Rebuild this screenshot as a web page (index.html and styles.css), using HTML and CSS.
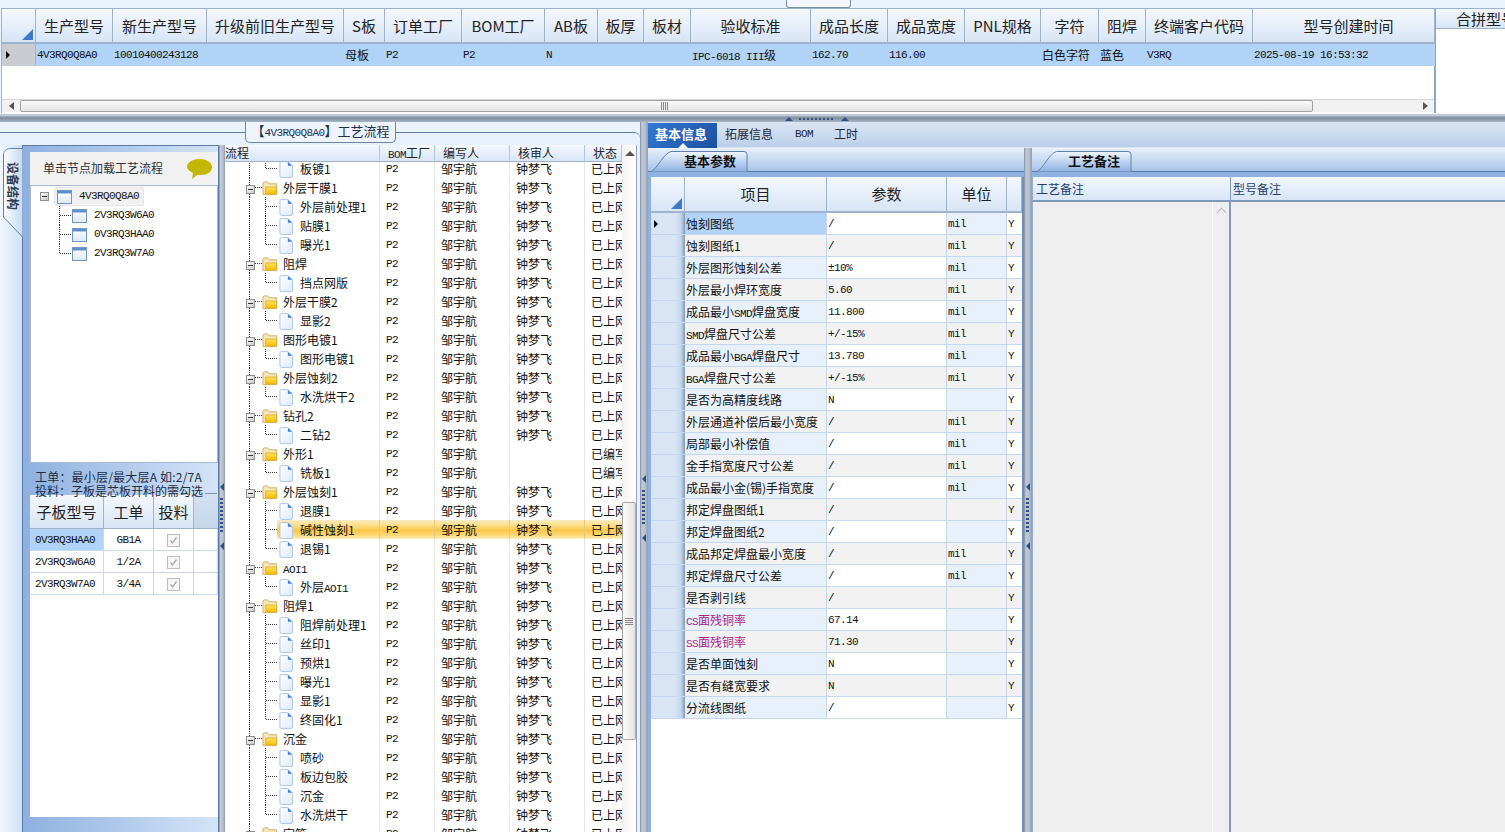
FILE: index.html
```html
<!DOCTYPE html>
<html lang="zh-CN">
<head>
<meta charset="utf-8">
<title>工艺流程</title>
<link rel="stylesheet" href="styles.css">
</head>
<body>
<svg class="defs" aria-hidden="true">
  <defs>
    <linearGradient id="fileg" x1="0" y1="0" x2="1" y2="1"><stop offset="0" stop-color="#ffffff"/><stop offset="1" stop-color="#dfeafa"/></linearGradient>
    <linearGradient id="foldg" x1="0" y1="0" x2="0" y2="1"><stop offset="0" stop-color="#ffe45c"/><stop offset="1" stop-color="#f7bb00"/></linearGradient>
    <linearGradient id="tabg" x1="0" y1="0" x2="0" y2="1"><stop offset="0" stop-color="#eff5fd"/><stop offset="1" stop-color="#8db0e2"/></linearGradient>
    <linearGradient id="vtabg" x1="0" y1="0" x2="1" y2="0"><stop offset="0" stop-color="#fbfdff"/><stop offset="1" stop-color="#c7daf3"/></linearGradient>
    <linearGradient id="wing" x1="0" y1="0" x2="0" y2="1"><stop offset="0" stop-color="#ffffff"/><stop offset="1" stop-color="#dfe8f4"/></linearGradient>
    <symbol id="file" viewBox="0 0 15 18"><path d="M2.5.5h7l5 4.500v11a1.500 1.500 0 0 1-1.500 1.500H2.500A1.500 1.500 0 0 1 1 16V2A1.500 1.500 0 0 1 2.500.5z" fill="url(#fileg)" stroke="#a6c3e6"/><path d="M9.500 1l4.500 4H9.500z" fill="#3d7fd8"/></symbol>
    <symbol id="folder" viewBox="0 0 17 17"><path d="M1 15.500V3.500l1-1.500h4l1.500 2h8v11.500z" fill="#f5e6b8" stroke="#cdae6a"/><path d="M4 15V7.500h11.500V15z" fill="url(#foldg)" stroke="#e0b030"/></symbol>
    <symbol id="win" viewBox="0 0 15 14"><rect x=".5" y=".5" width="14" height="13" fill="url(#wing)" stroke="#6f97c6"/><rect x="1" y="1" width="13" height="2.500" fill="#5e8fc8"/></symbol>
    <symbol id="chk" viewBox="0 0 13 13"><rect x=".5" y=".5" width="12" height="12" fill="#f6f6f6" stroke="#bdbdbd"/><path d="M3.500 6.500l2 2.500 4-5.500" fill="none" stroke="#a9a9a9" stroke-width="1.300"/></symbol>
    <symbol id="tabshape" viewBox="0 0 98 21" preserveAspectRatio="none"><path d="M.5 21C8 17 13 3 21 .5h73a3 3 0 0 1 3 3V21z" fill="url(#tabg)" stroke="#5f80ad"/></symbol>
  </defs>
</svg>

<div class="app">
  <section class="top">
    <div class="pull"></div>
    <div class="grid-wrap">
      <table class="tbl main-grid">
        <colgroup><col class="w34"><col class="w77"><col class="w94"><col class="w137"><col class="w41"><col class="w77"><col class="w83"><col class="w53"><col class="w46"><col class="w47"><col class="w120"><col class="w77"><col class="w77"><col class="w76"><col class="w58"><col class="w47"><col class="w107"><col class="w182"></colgroup>
        <thead>
          <tr><th class="corner"><i class="cornertri"></i></th><th>生产型号</th><th>新生产型号</th><th>升级前旧生产型号</th><th>S板</th><th>订单工厂</th><th>BOM工厂</th><th>AB板</th><th>板厚</th><th>板材</th><th>验收标准</th><th>成品长度</th><th>成品宽度</th><th>PNL规格</th><th>字符</th><th>阻焊</th><th>终端客户代码</th><th class="created">型号创建时间</th></tr>
        </thead>
        <tbody>
          <tr><td class="rh"><i class="cur"></i></td><td class="m">4V3RQ0Q8A0</td><td class="m">10010400243128</td><td></td><td>母板</td><td class="m">P2</td><td class="m">P2</td><td class="m">N</td><td></td><td></td><td><span class="m">IPC-6018 III</span>级</td><td class="m">162.70</td><td class="m">116.00</td><td></td><td>白色字符</td><td>蓝色</td><td class="m">V3RQ</td><td class="m">2025-08-19 16:53:32</td></tr>
        </tbody>
      </table>
      <div class="grid-space"></div>
      <div class="hscroll">
        <i class="arr-l"></i>
        <div class="hthumb"><i class="hgrip"></i></div>
        <i class="arr-r"></i>
      </div>
    </div>
    <div class="merge">
      <div class="merge-head">合拼型号</div>
    </div>
  </section>

  <div class="hsplit"><i class="tri"></i><i class="dots"></i><i class="tri"></i></div>

  <section class="lower">
    <div class="flow-area">
      <div class="flow-title">【<span class="m">4V3RQ0Q8A0</span>】工艺流程</div>
      <div class="flow-row">
        <div class="vtabs">
          <div class="vtab">
            <svg class="vtab-shape" viewBox="0 0 20 90"><path d="M19.500 .5H8C3 .5 .5 3 .5 7v62l19 20" fill="url(#vtabg)" stroke="#5f80ad"/></svg>
            <span class="vtab-text">设备结构</span>
          </div>
        </div>
        <div class="lp">
          <div class="lp-hd"><span>单击节点加载工艺流程</span>
            <svg class="bubble" viewBox="0 0 25 20"><path d="M12.500 0C19 0 25 3 25 8s-5 8-11 8c-2 0-3 0-4 0l-5 4 1-6C2 12 0 10 0 8 0 3 6 0 12.500 0z" fill="#c3b800"/></svg>
          </div>
          <div class="lp-tree">
            <div class="lt-root"><i class="bx"></i><span class="lt-sel"><svg class="wi"><use href="#win"/></svg><span class="m">4V3RQ0Q8A0</span></span></div>
            <div class="lt-child"><svg class="wi"><use href="#win"/></svg><span class="m">2V3RQ3W6A0</span></div>
            <div class="lt-child"><svg class="wi"><use href="#win"/></svg><span class="m">0V3RQ3HAA0</span></div>
            <div class="lt-child last"><svg class="wi"><use href="#win"/></svg><span class="m">2V3RQ3W7A0</span></div>
          </div>
          <div class="lp-note">
            <p class="wide-line">工单：最小层/最大层A 如:2/7A</p>
            <p>投料：子板是芯板开料的需勾选</p>
          </div>
          <div class="lp-grid">
            <table class="tbl sub-grid">
              <colgroup><col class="w74"><col class="w50"><col class="w40"><col></colgroup>
              <thead><tr><th>子板型号</th><th>工单</th><th>投料</th><th class="blank"></th></tr></thead>
              <tbody>
                <tr><td class="m picked">0V3RQ3HAA0</td><td class="m ctr">GB1A</td><td class="ctr"><svg class="ck"><use href="#chk"/></svg></td><td></td></tr>
                <tr><td class="m">2V3RQ3W6A0</td><td class="m ctr">1/2A</td><td class="ctr"><svg class="ck"><use href="#chk"/></svg></td><td></td></tr>
                <tr><td class="m">2V3RQ3W7A0</td><td class="m ctr">3/4A</td><td class="ctr"><svg class="ck"><use href="#chk"/></svg></td><td></td></tr>
              </tbody>
            </table>
          </div>
          <div class="lp-foot"></div>
        </div>
        <div class="vsplit thin"><i class="vgrip"></i></div>
        <div class="tree-panel">
          <div class="tree-main">
            <table class="tree-head">
              <colgroup><col class="t1"><col class="t2"><col class="t3"><col class="t4"><col class="t5"></colgroup>
              <tr><th class="first">流程</th><th class="b"><span class="m">BOM</span>工厂</th><th>编写人</th><th>核审人</th><th>状态</th></tr>
            </table>
            <table class="tree-body">
              <colgroup><col class="t1"><col class="t2"><col class="t3"><col class="t4"><col class="t5"></colgroup>
              <tr><td class="n c l"><svg class="fi"><use href="#file"/></svg>板镀1</td><td class="m">P2</td><td>邹宇航</td><td>钟梦飞</td><td>已上网</td></tr>
              <tr><td class="n f"><i class="bx"></i><svg class="fo"><use href="#folder"/></svg>外层干膜1</td><td class="m">P2</td><td>邹宇航</td><td>钟梦飞</td><td>已上网</td></tr>
              <tr><td class="n c"><svg class="fi"><use href="#file"/></svg>外层前处理1</td><td class="m">P2</td><td>邹宇航</td><td>钟梦飞</td><td>已上网</td></tr>
              <tr><td class="n c"><svg class="fi"><use href="#file"/></svg>贴膜1</td><td class="m">P2</td><td>邹宇航</td><td>钟梦飞</td><td>已上网</td></tr>
              <tr><td class="n c l"><svg class="fi"><use href="#file"/></svg>曝光1</td><td class="m">P2</td><td>邹宇航</td><td>钟梦飞</td><td>已上网</td></tr>
              <tr><td class="n f"><i class="bx"></i><svg class="fo"><use href="#folder"/></svg>阻焊</td><td class="m">P2</td><td>邹宇航</td><td>钟梦飞</td><td>已上网</td></tr>
              <tr><td class="n c l"><svg class="fi"><use href="#file"/></svg>挡点网版</td><td class="m">P2</td><td>邹宇航</td><td>钟梦飞</td><td>已上网</td></tr>
              <tr><td class="n f"><i class="bx"></i><svg class="fo"><use href="#folder"/></svg>外层干膜2</td><td class="m">P2</td><td>邹宇航</td><td>钟梦飞</td><td>已上网</td></tr>
              <tr><td class="n c l"><svg class="fi"><use href="#file"/></svg>显影2</td><td class="m">P2</td><td>邹宇航</td><td>钟梦飞</td><td>已上网</td></tr>
              <tr><td class="n f"><i class="bx"></i><svg class="fo"><use href="#folder"/></svg>图形电镀1</td><td class="m">P2</td><td>邹宇航</td><td>钟梦飞</td><td>已上网</td></tr>
              <tr><td class="n c l"><svg class="fi"><use href="#file"/></svg>图形电镀1</td><td class="m">P2</td><td>邹宇航</td><td>钟梦飞</td><td>已上网</td></tr>
              <tr><td class="n f"><i class="bx"></i><svg class="fo"><use href="#folder"/></svg>外层蚀刻2</td><td class="m">P2</td><td>邹宇航</td><td>钟梦飞</td><td>已上网</td></tr>
              <tr><td class="n c l"><svg class="fi"><use href="#file"/></svg>水洗烘干2</td><td class="m">P2</td><td>邹宇航</td><td>钟梦飞</td><td>已上网</td></tr>
              <tr><td class="n f"><i class="bx"></i><svg class="fo"><use href="#folder"/></svg>钻孔2</td><td class="m">P2</td><td>邹宇航</td><td>钟梦飞</td><td>已上网</td></tr>
              <tr><td class="n c l"><svg class="fi"><use href="#file"/></svg>二钻2</td><td class="m">P2</td><td>邹宇航</td><td>钟梦飞</td><td>已上网</td></tr>
              <tr><td class="n f"><i class="bx"></i><svg class="fo"><use href="#folder"/></svg>外形1</td><td class="m">P2</td><td>邹宇航</td><td></td><td>已编写</td></tr>
              <tr><td class="n c l"><svg class="fi"><use href="#file"/></svg>铣板1</td><td class="m">P2</td><td>邹宇航</td><td></td><td>已编写</td></tr>
              <tr><td class="n f"><i class="bx"></i><svg class="fo"><use href="#folder"/></svg>外层蚀刻1</td><td class="m">P2</td><td>邹宇航</td><td>钟梦飞</td><td>已上网</td></tr>
              <tr><td class="n c"><svg class="fi"><use href="#file"/></svg>退膜1</td><td class="m">P2</td><td>邹宇航</td><td>钟梦飞</td><td>已上网</td></tr>
              <tr class="sel"><td class="n c"><svg class="fi"><use href="#file"/></svg>碱性蚀刻1</td><td class="m">P2</td><td>邹宇航</td><td>钟梦飞</td><td>已上网</td></tr>
              <tr><td class="n c l"><svg class="fi"><use href="#file"/></svg>退锡1</td><td class="m">P2</td><td>邹宇航</td><td>钟梦飞</td><td>已上网</td></tr>
              <tr><td class="n f"><i class="bx"></i><svg class="fo"><use href="#folder"/></svg><span class="m">AOI1</span></td><td class="m">P2</td><td>邹宇航</td><td>钟梦飞</td><td>已上网</td></tr>
              <tr><td class="n c l"><svg class="fi"><use href="#file"/></svg>外层<span class="m">AOI1</span></td><td class="m">P2</td><td>邹宇航</td><td>钟梦飞</td><td>已上网</td></tr>
              <tr><td class="n f"><i class="bx"></i><svg class="fo"><use href="#folder"/></svg>阻焊1</td><td class="m">P2</td><td>邹宇航</td><td>钟梦飞</td><td>已上网</td></tr>
              <tr><td class="n c"><svg class="fi"><use href="#file"/></svg>阻焊前处理1</td><td class="m">P2</td><td>邹宇航</td><td>钟梦飞</td><td>已上网</td></tr>
              <tr><td class="n c"><svg class="fi"><use href="#file"/></svg>丝印1</td><td class="m">P2</td><td>邹宇航</td><td>钟梦飞</td><td>已上网</td></tr>
              <tr><td class="n c"><svg class="fi"><use href="#file"/></svg>预烘1</td><td class="m">P2</td><td>邹宇航</td><td>钟梦飞</td><td>已上网</td></tr>
              <tr><td class="n c"><svg class="fi"><use href="#file"/></svg>曝光1</td><td class="m">P2</td><td>邹宇航</td><td>钟梦飞</td><td>已上网</td></tr>
              <tr><td class="n c"><svg class="fi"><use href="#file"/></svg>显影1</td><td class="m">P2</td><td>邹宇航</td><td>钟梦飞</td><td>已上网</td></tr>
              <tr><td class="n c l"><svg class="fi"><use href="#file"/></svg>终固化1</td><td class="m">P2</td><td>邹宇航</td><td>钟梦飞</td><td>已上网</td></tr>
              <tr><td class="n f"><i class="bx"></i><svg class="fo"><use href="#folder"/></svg>沉金</td><td class="m">P2</td><td>邹宇航</td><td>钟梦飞</td><td>已上网</td></tr>
              <tr><td class="n c"><svg class="fi"><use href="#file"/></svg>喷砂</td><td class="m">P2</td><td>邹宇航</td><td>钟梦飞</td><td>已上网</td></tr>
              <tr><td class="n c"><svg class="fi"><use href="#file"/></svg>板边包胶</td><td class="m">P2</td><td>邹宇航</td><td>钟梦飞</td><td>已上网</td></tr>
              <tr><td class="n c"><svg class="fi"><use href="#file"/></svg>沉金</td><td class="m">P2</td><td>邹宇航</td><td>钟梦飞</td><td>已上网</td></tr>
              <tr><td class="n c l"><svg class="fi"><use href="#file"/></svg>水洗烘干</td><td class="m">P2</td><td>邹宇航</td><td>钟梦飞</td><td>已上网</td></tr>
              <tr><td class="n f"><i class="bx"></i><svg class="fo"><use href="#folder"/></svg>字符</td><td class="m">P2</td><td>邹宇航</td><td>钟梦飞</td><td>已上网</td></tr>
            </table>
          </div>
          <div class="vscroll"><i class="arr-u"></i><div class="vthumb"><i class="vthumb-grip"></i></div></div>
        </div>
      </div>
    </div>
    <div class="vsplit wide"><i class="vgrip"></i></div>

    <div class="detail">
      <div class="tabbar">
        <span class="tab on">基本信息</span><span class="tab t2w">拓展信息</span><span class="tab bomt m">BOM</span><span class="tab t3w">工时</span>
      </div>
      <div class="detail-body">
        <div class="params">
          <div class="strip"><div class="ptab"><svg class="ptab-bg"><use href="#tabshape"/></svg><span>基本参数</span></div></div>
          <div class="band"></div>
          <div class="pgrid">
            <table class="tbl par-grid">
              <colgroup><col class="w34"><col class="w142"><col class="w120"><col class="w60"><col></colgroup>
              <thead><tr><th class="corner"><i class="cornertri"></i></th><th>项目</th><th>参数</th><th>单位</th><th></th></tr></thead>
              <tbody>
                <tr><td class="rh2"><i class="cur"></i></td><td class="picked">蚀刻图纸</td><td class="m">/</td><td class="m">mil</td><td class="m">Y</td></tr>
                <tr><td class="rh2"></td><td>蚀刻图纸1</td><td class="m">/</td><td class="m">mil</td><td class="m">Y</td></tr>
                <tr><td class="rh2"></td><td>外层图形蚀刻公差</td><td class="m">±10%</td><td class="m">mil</td><td class="m">Y</td></tr>
                <tr><td class="rh2"></td><td>外层最小焊环宽度</td><td class="m">5.60</td><td class="m">mil</td><td class="m">Y</td></tr>
                <tr><td class="rh2"></td><td>成品最小<span class="m">SMD</span>焊盘宽度</td><td class="m">11.800</td><td class="m">mil</td><td class="m">Y</td></tr>
                <tr><td class="rh2"></td><td><span class="m">SMD</span>焊盘尺寸公差</td><td class="m">+/-15%</td><td class="m">mil</td><td class="m">Y</td></tr>
                <tr><td class="rh2"></td><td>成品最小<span class="m">BGA</span>焊盘尺寸</td><td class="m">13.780</td><td class="m">mil</td><td class="m">Y</td></tr>
                <tr><td class="rh2"></td><td><span class="m">BGA</span>焊盘尺寸公差</td><td class="m">+/-15%</td><td class="m">mil</td><td class="m">Y</td></tr>
                <tr><td class="rh2"></td><td>是否为高精度线路</td><td class="m">N</td><td class="m"></td><td class="m">Y</td></tr>
                <tr><td class="rh2"></td><td>外层通道补偿后最小宽度</td><td class="m">/</td><td class="m">mil</td><td class="m">Y</td></tr>
                <tr><td class="rh2"></td><td>局部最小补偿值</td><td class="m">/</td><td class="m">mil</td><td class="m">Y</td></tr>
                <tr><td class="rh2"></td><td>金手指宽度尺寸公差</td><td class="m">/</td><td class="m">mil</td><td class="m">Y</td></tr>
                <tr><td class="rh2"></td><td>成品最小金(锡)手指宽度</td><td class="m">/</td><td class="m">mil</td><td class="m">Y</td></tr>
                <tr><td class="rh2"></td><td>邦定焊盘图纸1</td><td class="m">/</td><td class="m"></td><td class="m">Y</td></tr>
                <tr><td class="rh2"></td><td>邦定焊盘图纸2</td><td class="m">/</td><td class="m"></td><td class="m">Y</td></tr>
                <tr><td class="rh2"></td><td>成品邦定焊盘最小宽度</td><td class="m">/</td><td class="m">mil</td><td class="m">Y</td></tr>
                <tr><td class="rh2"></td><td>邦定焊盘尺寸公差</td><td class="m">/</td><td class="m">mil</td><td class="m">Y</td></tr>
                <tr><td class="rh2"></td><td>是否剥引线</td><td class="m">/</td><td class="m"></td><td class="m">Y</td></tr>
                <tr><td class="rh2"></td><td class="hot"><span class="m">CS</span>面残铜率</td><td class="m">67.14</td><td class="m"></td><td class="m">Y</td></tr>
                <tr><td class="rh2"></td><td class="hot"><span class="m">SS</span>面残铜率</td><td class="m">71.30</td><td class="m"></td><td class="m">Y</td></tr>
                <tr><td class="rh2"></td><td>是否单面蚀刻</td><td class="m">N</td><td class="m"></td><td class="m">Y</td></tr>
                <tr><td class="rh2"></td><td>是否有缝宽要求</td><td class="m">N</td><td class="m"></td><td class="m">Y</td></tr>
                <tr><td class="rh2"></td><td>分流线图纸</td><td class="m">/</td><td class="m"></td><td class="m">Y</td></tr>
              </tbody>
            </table>
          </div>
        </div>
        <div class="vsplit mid"><i class="vgrip"></i></div>
        <div class="remarks">
          <div class="strip"><div class="ptab rt"><svg class="ptab-bg"><use href="#tabshape"/></svg><span>工艺备注</span></div></div>
          <div class="band"></div>
          <div class="rem-head"><div class="rc1">工艺备注</div><div class="rc2">型号备注</div></div>
          <div class="rem-body"><div class="rb1"><div class="rb-scroll"><i class="chev"></i></div></div><div class="rb2"></div></div>
        </div>
      </div>
    </div>
  </section>
</div>
</body>
</html>
```
FILE: styles.css
```css
* { box-sizing: border-box; }
html, body { margin: 0; height: 100%; overflow: hidden; }
body { font: 12px/1.2 "Noto Sans CJK SC", "Noto Sans", sans-serif; color: #111; background: #eaf2fc; }
i { display: block; }
.defs { position: absolute; width: 0; height: 0; }
.m { font-family: "Liberation Mono", "Noto Sans CJK SC", monospace; font-size: 11px; letter-spacing: -.6px; }
span.m { line-height: 1; }
.app { width: 1505px; height: 832px; display: flex; flex-direction: column; overflow: hidden; }

/* shared table */
.tbl { border-collapse: separate; border-spacing: 0; table-layout: fixed; width: 100%; }
.tbl th { font-weight: 400; font-size: 15px; color: #222; background: linear-gradient(#f4f8fe, #d8e5f6); border-right: 1px solid #9fb4cc; border-bottom: 2px solid #9fb4cc; padding: 0; white-space: nowrap; overflow: hidden; }
.tbl td { padding: 0 0 0 1px; white-space: nowrap; overflow: hidden; }
.tbl td.m { padding-top: 2px; }
.corner { position: relative; }
.cornertri { position: absolute; right: 2px; bottom: 2px; width: 0; height: 0; border-style: solid; border-width: 0 0 11px 11px; border-color: transparent transparent #3f78c9 transparent; }
.cur { width: 0; height: 0; border-style: solid; border-width: 4px 0 4px 4px; border-color: transparent transparent transparent #111; margin-left: 3px; }

/* top grid */
.top { position: relative; height: 113px; padding-top: 8px; display: flex; background: #eaf2fc; }
.pull { position: absolute; left: 786px; top: 0; width: 65px; height: 8px; background: #f3f7fd; border: 1px solid #7a8ea8; border-top: 0; border-radius: 0 0 3px 3px; }
.grid-wrap { width: 1435px; margin-left: 1px; border: 1px solid #9fb4cc; border-bottom: 0; border-right: 2px solid #8ea6c4; background: #fff; display: flex; flex-direction: column; }
.w34 { width: 34px; } .w77 { width: 77px; } .w94 { width: 94px; } .w137 { width: 137px; } .w41 { width: 41px; } .w83 { width: 83px; } .w53 { width: 53px; } .w46 { width: 46px; } .w47 { width: 47px; } .w120 { width: 120px; } .w76 { width: 76px; } .w58 { width: 58px; } .w107 { width: 107px; } .w182 { width: 182px; }
.w74 { width: 74px; } .w50 { width: 50px; } .w40 { width: 40px; } .w142 { width: 142px; } .w60 { width: 60px; }
.main-grid th { height: 35px; }
.main-grid th.created { padding-left: 10px; }
.main-grid td { height: 22px; background: #b0d3f7; }
.main-grid td.rh { background: #c9ccd1; border-right: 1px solid #9fb4cc; }
.grid-space { flex: 1; }
.hscroll { height: 13px; background: #f1f1f1; display: flex; align-items: center; border-top: 1px solid #d8d8d8; margin-bottom: 1px; }
.arr-l { width: 0; height: 0; margin-left: 7px; border-style: solid; border-width: 4px 5px 4px 0; border-color: transparent #555 transparent transparent; }
.hthumb { width: 1293px; height: 12px; margin-left: 6px; background: linear-gradient(#fbfbfb, #e3e3e3); border: 1px solid #a3a3a3; border-radius: 2px; display: flex; justify-content: center; align-items: center; }
.hgrip { width: 7px; height: 8px; margin-right: 4px; background: repeating-linear-gradient(90deg, #888 0 1px, transparent 1px 2px); }
.arr-r { width: 0; height: 0; margin-left: 110px; border-style: solid; border-width: 4px 0 4px 5px; border-color: transparent transparent transparent #555; }
.merge { flex: 1; background: #fff; }
.merge-head { height: 21px; padding-left: 20px; font-size: 15px; color: #222; line-height: 20px; white-space: nowrap; overflow: hidden; background: linear-gradient(#f4f8fe, #d8e5f6); border-top: 1px solid #9fb4cc; border-bottom: 1px solid #9fb4cc; }

/* horizontal splitter */
.hsplit { height: 9px; flex: none; display: flex; align-items: flex-end; padding: 0 0 1px 785px; gap: 6px; background: linear-gradient(#f3f6fa 0, #f3f6fa 1px, #9aa8b8 1px, #dfe6ee 2px, #a4b0c0 3px, #808e9f 5px, #a8b6c8 100%); }
.tri { width: 0; height: 0; border-style: solid; border-width: 0 4px 4px; border-color: transparent transparent #34507e; }
.dots { width: 36px; height: 2px; margin-bottom: 1px; background: repeating-linear-gradient(90deg, #34507e 0 2px, transparent 2px 4px); }

/* lower area */
.lower { flex: 1; min-height: 0; display: flex; }
.flow-area { position: relative; width: 640px; flex: none; margin-top: 10px; border-top: 1px solid #5e7ba3; padding-top: 12px; background: #e8f1fb; border-top-right-radius: 6px; }
.flow-title { position: absolute; left: 245px; top: -11px; width: 151px; height: 21px; font-size: 13px; line-height: 18px; text-align: center; color: #1e3050; background: #eef4fc; border: 1px solid #6a85a8; border-top: 0; border-radius: 0 0 5px 5px; white-space: nowrap; }
.flow-row { display: flex; height: 687px; }
.vtabs { width: 22px; flex: none; background: linear-gradient(90deg, #f1f7fe, #cfe1f7); padding: 3px 0 0 3px; }
.vtab { position: relative; width: 20px; height: 90px; }
.vtab-shape { position: absolute; inset: 0; width: 20px; height: 90px; }
.vtab-text { position: absolute; left: 3px; top: 14px; writing-mode: vertical-rl; text-orientation: sideways; font-size: 12px; font-weight: 700; color: #333b4d; }

.lp { width: 197px; flex: none; display: flex; flex-direction: column; border-left: 1px solid #5a7ba8; border-top: 1px solid #5a7ba8; border-right: 1px solid #5a7ba8; padding: 6px 0 0 7px; background: linear-gradient(90deg, #8eb0e0, #d4e4f7); }
.lp-hd { height: 33px; flex: none; display: flex; align-items: center; justify-content: space-between; padding: 0 6px 0 13px; background: #f1f1f1; color: #2b3340; font-size: 12px; }
.bubble { width: 25px; height: 20px; }
.lp-tree { height: 278px; flex: none; background: #fff; border: 1px solid #a9bcd2; padding-top: 1px; }
.lt-root { display: flex; align-items: center; height: 19px; padding-left: 9px; }
.lt-root .bx { flex: none; }
.lt-sel { display: flex; align-items: center; gap: 7px; width: 90px; height: 19px; margin-left: 5px; padding-left: 3px; background: #f1f1f1; border-radius: 3px; box-shadow: inset 0 0 0 1px #e6e6e6; }
.lt-child { display: flex; align-items: center; gap: 7px; height: 19px; padding-left: 41px; background: repeating-linear-gradient(180deg, #333 0 1px, transparent 1px 2px) 28px 0/1px 100% no-repeat, repeating-linear-gradient(90deg, #333 0 1px, transparent 1px 2px) 29px 9px/11px 1px no-repeat; }
.lt-child.last { background-size: 1px 10px, 11px 1px; }
.wi { width: 15px; height: 14px; flex: none; }
.lp-note { position: relative; z-index: 1; height: 32px; flex: none; padding: 7px 0 0 5px; color: #1c2c44; font-size: 12px; line-height: 14px; white-space: nowrap; }
.lp-note::after { content: ""; position: absolute; right: 1px; top: 30px; width: 12px; height: 1px; background: #7f93ad; }
.lp-note p { margin: 0; }
.lp-note .wide-line { letter-spacing: .2px; }
.lp-grid { height: 322px; flex: none; background: #fff; }
.sub-grid th { height: 34px; font-size: 15px; border-bottom: 1px solid #9fb4cc; }
.sub-grid th.blank { background: linear-gradient(#d3e0f1, #c6d6ea); border-right: 0; }
.sub-grid td { height: 22px; border-right: 1px solid #c6d9ef; border-bottom: 1px solid #c6d9ef; padding-left: 5px; background: #fff; vertical-align: middle; }
.sub-grid td.picked { background: #b0d3f7; }
.sub-grid td.ctr { text-align: center; padding-left: 0; }
.ck { width: 13px; height: 13px; display: inline-block; vertical-align: middle; }
.lp-foot { flex: 1; }

.vsplit { flex: none; position: relative; background: linear-gradient(90deg, #7b8ea8, #c4ccd6 25%, #b3bcc8 70%, #8d9aab); }
.vsplit.thin { width: 6px; }
.vsplit.wide { width: 8px; }
.vsplit.mid { width: 8px; }
.vgrip { position: absolute; left: 1px; width: 3px; height: 35px; background: repeating-linear-gradient(180deg, #34507e 0 2px, transparent 2px 4px); }
.thin .vgrip { top: 353px; }
.wide .vgrip { top: 368px; left: 2px; }
.mid .vgrip { top: 350px; left: 2px; }
.vgrip::before, .vgrip::after { content: ""; position: absolute; left: 0; border-style: solid; border-width: 4px 4px 4px 0; border-color: transparent #34507e transparent transparent; }
.vgrip::before { top: -15px; }
.vgrip::after { bottom: -17px; }

.tree-panel { width: 412px; flex: none; display: flex; background: #fff; }
.tree-main { width: 397px; flex: none; overflow: hidden; }
.tree-head, .tree-body { border-collapse: separate; border-spacing: 0; table-layout: fixed; width: 397px; }
.t1 { width: 155px; } .t2 { width: 55px; } .t3 { width: 75px; } .t4 { width: 75px; } .t5 { width: 37px; }
.tree-head { position: relative; z-index: 1; }
.tree-head th { height: 17px; font-weight: 400; font-size: 12px; color: #222; text-align: left; padding: 0 0 0 8px; white-space: nowrap; overflow: hidden; background: linear-gradient(#f4f8fe, #d8e5f6); border-right: 1px solid #b5c6da; border-bottom: 1px solid #9fb4cc; }
.tree-head th.first { padding-left: 0; }
.tree-body { margin-top: -3px; }
.tree-body td { height: 19px; padding: 0 0 0 6px; white-space: nowrap; overflow: hidden; border-right: 1px solid #e4e6ea; line-height: 17px; }
.tree-body td.m { padding-top: 1px; }
.tree-body td:last-child { border-right: 0; }
.tree-body td.n { --dv: repeating-linear-gradient(180deg, #333 0 1px, transparent 1px 2px); --dh: repeating-linear-gradient(90deg, #333 0 1px, transparent 1px 2px); background: var(--dv) 24px 0/1px 100% no-repeat; padding-left: 54px; }
.tree-body td.f { padding-left: 21px; background: var(--dv) 24px 0/1px 100% no-repeat, var(--dh) 30px 9px/7px 1px no-repeat; }
.tree-body td.c { background: var(--dv) 24px 0/1px 100% no-repeat, var(--dv) 40px 0/1px 100% no-repeat, var(--dh) 41px 9px/12px 1px no-repeat; }
.tree-body td.c.l { background: var(--dv) 24px 0/1px 100% no-repeat, var(--dv) 40px 0/1px 10px no-repeat, var(--dh) 41px 9px/12px 1px no-repeat; }
.bx { display: inline-block; position: relative; width: 9px; height: 9px; vertical-align: -1px; margin-right: 7px; background: linear-gradient(135deg, #fff, #c8c8c8); border: 1px solid #8e8e8e; }
.lt-root .bx { margin-right: 0; }
.bx::after { content: ""; position: absolute; left: 1px; top: 3px; width: 5px; height: 1px; background: #333; }
.fo { width: 16px; height: 16px; vertical-align: -3px; margin-right: 5px; }
.fi { width: 14px; height: 17px; vertical-align: -4px; margin-right: 7px; }
.sel td { background: linear-gradient(#f6ecc4, #fde08c 25%, #fbc94a 55%, #fdd878 80%, #fdf0c0); border-right-color: #e8c878; }
.tree-body .sel td.n { background: var(--dv) 24px 0/1px 100% no-repeat, var(--dv) 40px 0/1px 100% no-repeat, var(--dh) 41px 9px/11px 1px no-repeat, linear-gradient(#f6ecc4, #fde08c 25%, #fbc94a 55%, #fdd878 80%, #fdf0c0) 52px 0/100% 100% no-repeat; }
.vscroll { width: 15px; flex: none; background: linear-gradient(90deg, #f2f2f2, #fff); border-right: 1px solid #8ea6c4; }
.arr-u { width: 0; height: 0; margin: 6px 0 0 3px; border-style: solid; border-width: 0 5px 5px; border-color: transparent transparent #555; }
.vthumb { width: 14px; height: 238px; margin-top: 346px; background: linear-gradient(90deg, #fbfbfb, #e4e4e4); border: 1px solid #a8a8a8; border-radius: 2px; display: flex; align-items: center; justify-content: center; }
.vthumb-grip { width: 8px; height: 7px; background: repeating-linear-gradient(180deg, #888 0 1px, transparent 1px 2px); }

/* detail */
.detail { flex: 1; min-width: 0; display: flex; flex-direction: column; }
.tabbar { height: 26px; flex: none; display: flex; align-items: flex-start; background: linear-gradient(#dbe6f5, #bbcfe9); border-bottom: 1px solid #dfe4ea; }
.tab { height: 24px; line-height: 24px; font-size: 12px; color: #1b2738; }
.tab.on { position: relative; width: 69px; height: 25px; margin-top: 1px; padding-left: 7px; line-height: 22px; font-size: 13px; font-weight: 700; color: #fff; background: linear-gradient(135deg, #3478d6, #1c4f9e); }
.tab.on::after { content: ""; position: absolute; left: 30px; bottom: 0; border-style: solid; border-width: 0 5px 5px; border-color: transparent transparent #eaf2fc; }
.t2w { margin-left: 8px; }
.tab.bomt { margin-left: 22px; font-size: 11px; line-height: 24px; }
.t3w { margin-left: 21px; }
.detail-body { flex: 1; min-height: 0; display: flex; }
.params { width: 376px; flex: none; display: flex; flex-direction: column; }
.strip { height: 23px; flex: none; padding: 3px 0 0 2px; background: linear-gradient(#e9f1fb, #a8c3e8); }
.ptab { position: relative; width: 98px; height: 20px; font-size: 13px; font-weight: 700; color: #111; line-height: 20px; padding-left: 34px; }
.ptab span { position: relative; }
.ptab-bg { position: absolute; left: 0; top: 0; width: 100%; height: 21px; }
.ptab.rt { margin-left: 2px; width: 96px; padding-left: 32px; }
.band { height: 6px; flex: none; background: #8fb0e0; border-top: 1px solid #5a7ba8; }
.pgrid { flex: 1; min-height: 0; background: #fff; border-left: 3px solid #8fb0e0; border-right: 2px solid #6f8fb8; }
.par-grid th { height: 36px; font-size: 15px; }
.par-grid td { height: 22px; border-right: 1px solid #c5d7ef; border-bottom: 1px solid #c5d7ef; padding: 1px 0 0 1px; background: #fff; }
.par-grid td:nth-child(2), .par-grid td:nth-child(4) { background: #e7f0fb; }
.par-grid tr:nth-child(even) td { background: #f2f2f2; }
.par-grid td:nth-child(5) { border-right: 0; }
.par-grid td.rh2, .par-grid tr:nth-child(even) td.rh2 { background: linear-gradient(90deg, #d8e5f5 70%, #c6d6ea 88%, #7f9ab8); border-right: 0; padding: 0; }
.par-grid td.picked { background: #b0d3f7; }
.par-grid td.hot { color: #a81f8c; }
.remarks { flex: 1; min-width: 0; display: flex; flex-direction: column; }
.rem-head { height: 25px; flex: none; display: flex; background: linear-gradient(#f2f7fe, #d8e5f6); border-bottom: 2px solid #7f9ab8; color: #24406e; line-height: 24px; border-left: 1px solid #8fb0e0; }
.rc1 { width: 198px; padding-left: 3px; border-right: 1px solid #7f9ab8; }
.rc2 { flex: 1; padding-left: 2px; }
.rem-body { flex: 1; min-height: 0; display: flex; background: #efefef; border-left: 1px solid #8fb0e0; }
.rb1 { width: 198px; flex: none; border-right: 2px solid #7f9ab8; display: flex; justify-content: flex-end; }
.rb-scroll { width: 17px; border-left: 1px solid #fff; padding: 7px 0 0 5px; }
.chev { width: 7px; height: 7px; border-left: 1.500px solid #bcbcbc; border-top: 1.500px solid #bcbcbc; transform: rotate(45deg); }
.rb2 { flex: 1; }
```
